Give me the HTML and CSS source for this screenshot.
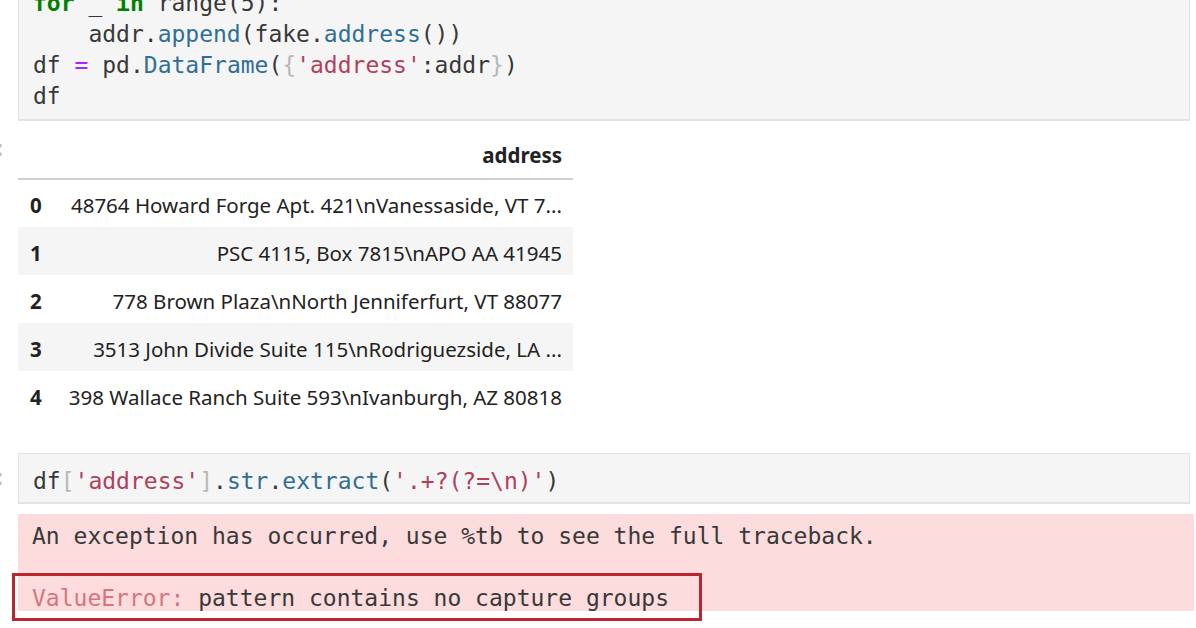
FILE: index.html
```html
<!DOCTYPE html>
<html>
<head>
<meta charset="utf-8">
<link rel="stylesheet" href="styles.css">
</head>
<body>
<div class="nb">
  <div class="cell cell-top">
    <div class="prompt"></div>
    <div class="input">
<pre class="code"><span class="kw">for</span> _ <span class="kw">in</span> range(5):
    addr.<span class="pr">append</span>(fake.<span class="pr">address</span>())
df <span class="op">=</span> pd.<span class="pr">DataFrame</span>(<span class="br">{</span><span class="st">'address'</span>:addr<span class="br">}</span>)
df</pre>
    </div>
  </div>

  <div class="cell cell-out">
    <div class="prompt"><span class="colon">:</span></div>
    <div class="output">
      <table class="df">
        <thead>
          <tr><th class="idx"></th><th>address</th></tr>
        </thead>
        <tbody>
          <tr><th class="idx">0</th><td>48764 Howard Forge Apt. 421\nVanessaside, VT 7...</td></tr>
          <tr><th class="idx">1</th><td>PSC 4115, Box 7815\nAPO AA 41945</td></tr>
          <tr><th class="idx">2</th><td>778 Brown Plaza\nNorth Jenniferfurt, VT 88077</td></tr>
          <tr><th class="idx">3</th><td>3513 John Divide Suite 115\nRodriguezside, LA ...</td></tr>
          <tr><th class="idx">4</th><td>398 Wallace Ranch Suite 593\nIvanburgh, AZ 80818</td></tr>
        </tbody>
      </table>
    </div>
  </div>

  <div class="cell cell-in2">
    <div class="prompt"><span class="colon">:</span></div>
    <div class="input">
<pre class="code">df<span class="br">[</span><span class="st">'address'</span><span class="br">]</span>.<span class="pr">str</span>.<span class="pr">extract</span>(<span class="st">'.+?(?=\n)'</span>)</pre>
    </div>
  </div>

  <div class="cell cell-err">
    <div class="prompt"></div>
    <div class="err">
<pre class="code">An exception has occurred, use %tb to see the full traceback.</pre>
<pre class="code err-line"><span class="ename">ValueError:</span> pattern contains no capture groups</pre>
      <div class="mark"></div>
    </div>
  </div>
</div>
</body>
</html>
```

FILE: styles.css
```css
html, body {
  margin: 0;
  padding: 0;
  background: #ffffff;
  overflow: hidden;
}
.nb {
  width: 1196px;
  height: 628px;
  overflow: hidden;
  display: flex;
  flex-direction: column;
}
.cell {
  display: flex;
  flex-direction: row;
}
.prompt {
  width: 18px;
  flex: none;
  position: relative;
  font-family: "DejaVu Sans Mono", monospace;
  font-size: 23px;
  color: #bdbdbd;
}
.colon {
  display: block;
  margin-left: -7px;
}
.code {
  margin: 0;
  font-family: "DejaVu Sans Mono", monospace;
  font-size: 23px;
  line-height: 31px;
  color: #383838;
  white-space: pre;
}
.kw { color: #008000; font-weight: bold; }
.pr { color: #2f6f96; }
.op { color: #aa22ff; }
.st { color: #b0405c; }
.br { color: #b8b8b8; }

.cell-top {
  margin-top: -20px;
}
.cell-top .input {
  width: 1172px;
  background: #f5f5f5;
  border: 1px solid #e0e0e0;
  border-top: none;
  border-bottom: 2px solid #e3e3e3;
  padding: 8px 14px 7px 14px;
  box-sizing: border-box;
  height: 141px;
}

.cell-out {
  margin-top: 9px;
}
.cell-out .prompt .colon {
  padding-top: 5px;
}
.df {
  border-collapse: collapse;
  font-family: "Noto Sans", "Open Sans", sans-serif;
  font-size: 20.5px;
  color: #222222;
  width: 555px;
}
.df thead th {
  height: 49px;
  text-align: right;
  font-weight: bold;
  padding: 2px 11px 0 0;
  box-sizing: border-box;
  border-bottom: 2px solid #cfcfcf;
}
.df tbody tr {
  height: 48px;
}
.df tbody tr:nth-child(even) {
  background: #f5f5f5;
}
.df td {
  text-align: right;
  padding: 3px 11px 0 0;
  white-space: nowrap;
}
.df th.idx {
  width: 34px;
  text-align: left;
  padding: 3px 0 0 12px;
  font-weight: bold;
}
.df thead th.idx { padding: 0; }

.cell-in2 {
  margin-top: 34px;
}
.cell-in2 .prompt .colon {
  padding-top: 11px;
}
.cell-in2 .input {
  width: 1172px;
  background: #f5f5f5;
  border: 1px solid #e2e2e2;
  border-bottom: 2px solid #e3e3e3;
  box-sizing: border-box;
  height: 51px;
  padding: 12px 14px 0 14px;
}

.cell-err {
  margin-top: 10px;
}
.err {
  position: relative;
  width: 1176px;
  height: 97px;
  background: #fddcdd;
  box-sizing: border-box;
  padding: 7px 14px 0 14px;
  display: flex;
  flex-direction: column;
  gap: 31px;
}
.ename { color: #d5767d; }
.mark {
  position: absolute;
  left: -6px;
  top: 59px;
  width: 690px;
  height: 48px;
  border: 3px solid #bb2530;
  box-sizing: border-box;
}
```
